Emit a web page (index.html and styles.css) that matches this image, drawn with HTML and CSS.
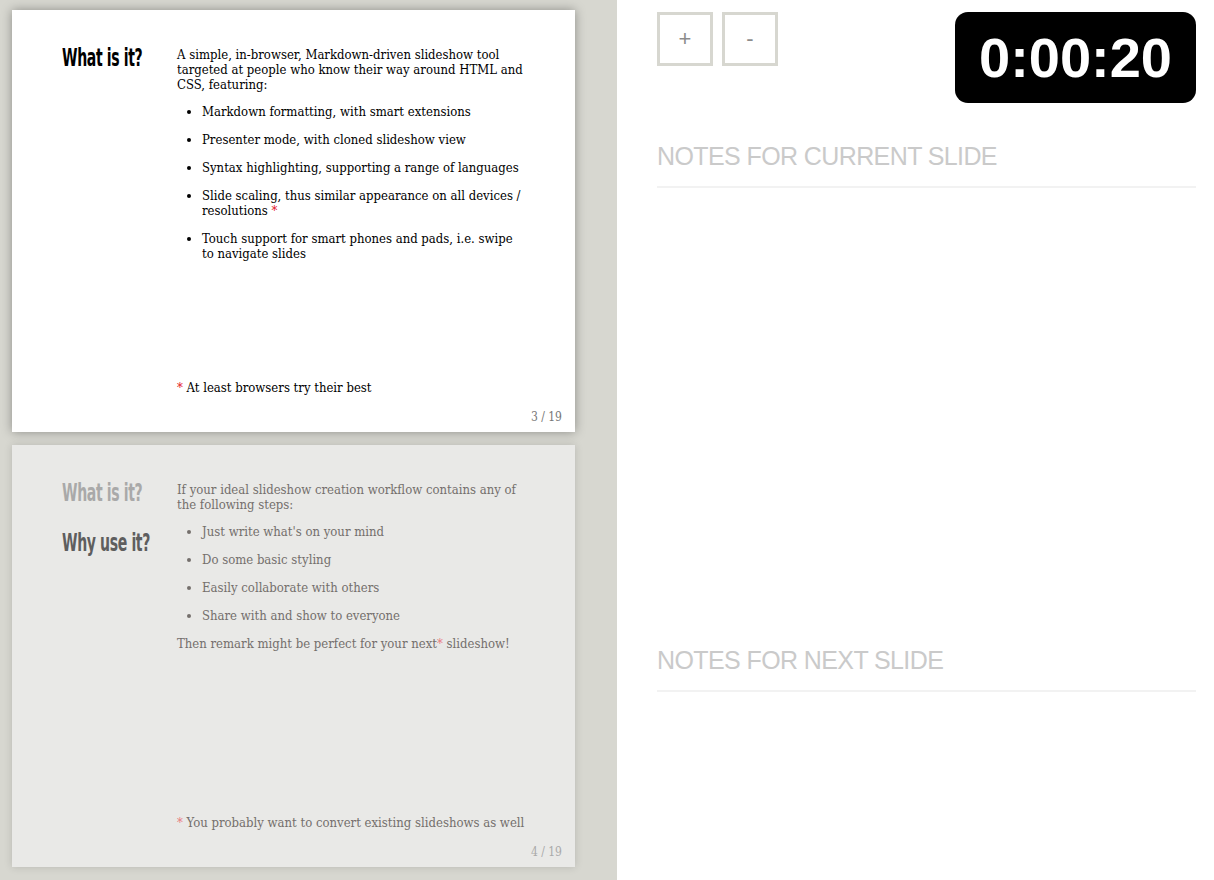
FILE: index.html
```html
<!DOCTYPE html>
<html>
<head>
<meta charset="utf-8">
<link rel="stylesheet" href="styles.css">
</head>
<body>
<div class="app">
  <div class="slides-pane">
    <div class="slide current">
      <div class="slide-body">
        <div class="titles">
          <h1 class="title">What is it?</h1>
        </div>
        <div class="content">
          <p>A simple, in-browser, Markdown-driven slideshow tool targeted at people who know their way around HTML and CSS, featuring:</p>
          <ul>
            <li>Markdown formatting, with smart extensions</li>
            <li>Presenter mode, with cloned slideshow view</li>
            <li>Syntax highlighting, supporting a range of languages</li>
            <li>Slide scaling, thus similar appearance on all devices / resolutions <span class="star">*</span></li>
            <li>Touch support for smart phones and pads, i.e. swipe to navigate slides</li>
          </ul>
        </div>
      </div>
      <div class="footnote"><span class="star">*</span> At least browsers try their best</div>
      <div class="page-no">3 / 19</div>
    </div>
    <div class="slide next">
      <div class="slide-body">
        <div class="titles">
          <h1 class="title faded">What is it?</h1>
          <h1 class="title">Why use it?</h1>
        </div>
        <div class="content">
          <p>If your ideal slideshow creation workflow contains any of the following steps:</p>
          <ul>
            <li>Just write what's on your mind</li>
            <li>Do some basic styling</li>
            <li>Easily collaborate with others</li>
            <li>Share with and show to everyone</li>
          </ul>
          <p>Then remark might be perfect for your next<span class="star">*</span> slideshow!</p>
        </div>
      </div>
      <div class="footnote"><span class="star">*</span> You probably want to convert existing slideshows as well</div>
      <div class="page-no">4 / 19</div>
    </div>
  </div>
  <div class="notes-pane">
    <div class="toolbar">
      <div class="btns">
        <button class="btn">+</button>
        <button class="btn">-</button>
      </div>
      <div class="timer">0:00:20</div>
    </div>
    <section class="notes current-notes">
      <h2 class="notes-title">NOTES FOR CURRENT SLIDE</h2>
      <div class="notes-body"></div>
    </section>
    <section class="notes next-notes">
      <h2 class="notes-title">NOTES FOR NEXT SLIDE</h2>
      <div class="notes-body"></div>
    </section>
  </div>
</div>
</body>
</html>
```
FILE: styles.css
```css
html, body {
  margin: 0;
  padding: 0;
  height: 100%;
  overflow: hidden;
}
body {
  font-family: "Liberation Sans", Arial, sans-serif;
  background: #ffffff;
}
.app {
  display: flex;
  height: 880px;
  overflow: hidden;
}
.slides-pane {
  width: 617px;
  flex: none;
  background: #d7d7d0;
  padding: 10px 0 0 12px;
  box-sizing: border-box;
  display: flex;
  flex-direction: column;
  gap: 13px;
}
.slide {
  width: 563px;
  height: 422px;
  flex: none;
  box-sizing: border-box;
  background: #ffffff;
  box-shadow: 0 0 10px rgba(0, 0, 0, 0.35);
  display: flex;
  flex-direction: column;
  padding: 37px 13px 7px 50px;
  font-family: "DejaVu Serif Condensed", "DejaVu Serif", serif;
  font-size: 13px;
  line-height: 15px;
  color: #000;
}
.slide.next {
  background: #e9e9e7;
  color: #746f6c;
  box-shadow: 0 0 8px rgba(0, 0, 0, 0.15);
}
.slide-body {
  display: flex;
  flex: 1;
}
.titles {
  width: 115px;
  flex: none;
  display: flex;
  flex-direction: column;
  gap: 22px;
  margin-top: -3px;
}
.title {
  margin: 0;
  font-family: "DejaVu Sans Condensed", "DejaVu Sans", sans-serif;
  font-weight: bold;
  font-size: 25px;
  line-height: 28px;
  letter-spacing: -0.6px;
  white-space: nowrap;
  color: #000;
  transform: scaleX(0.625);
  transform-origin: left center;
}
.next .title {
  color: #5e5e5e;
}
.next .title.faded {
  color: #a9a9a9;
}
.content {
  width: 350px;
}
.content p {
  margin: 0 0 12px;
}
.content ul {
  margin: 0 0 13px;
  padding-left: 25px;
}
.content li {
  margin-bottom: 13px;
}
.star {
  color: #e3111d;
}
.next .star {
  color: #e87a80;
}
.footnote {
  padding-left: 115px;
  margin-bottom: 15px;
}
.page-no {
  text-align: right;
  font-size: 12px;
  color: #777;
}
.next .page-no {
  color: #aaa;
}
.notes-pane {
  flex: 1;
  padding: 12px 18px 0 40px;
  box-sizing: border-box;
  display: flex;
  flex-direction: column;
  overflow: hidden;
}
.toolbar {
  display: flex;
  justify-content: space-between;
  align-items: flex-start;
}
.btns {
  display: flex;
  gap: 9px;
}
.btn {
  width: 56px;
  height: 54px;
  box-sizing: border-box;
  border: 3px solid #d7d7d0;
  background: #fff;
  color: #8c8c8c;
  font-family: "Liberation Sans", Arial, sans-serif;
  font-size: 22px;
  padding: 0;
  margin: 0;
}
.timer {
  width: 241px;
  height: 91px;
  box-sizing: border-box;
  background: #000;
  color: #fff;
  border-radius: 13px;
  font-family: "Liberation Sans", Arial, sans-serif;
  font-weight: bold;
  font-size: 56px;
  line-height: 91px;
  text-align: center;
}
.notes-title {
  margin: 0;
  font-weight: normal;
  font-size: 25px;
  line-height: 30px;
  color: #cacaca;
  letter-spacing: -0.6px;
}
.current-notes {
  margin-top: 38px;
}
.notes-body {
  border-top: 2px solid #f2f2f2;
  margin-top: 15px;
}
.current-notes .notes-body {
  height: 457px;
}
```
